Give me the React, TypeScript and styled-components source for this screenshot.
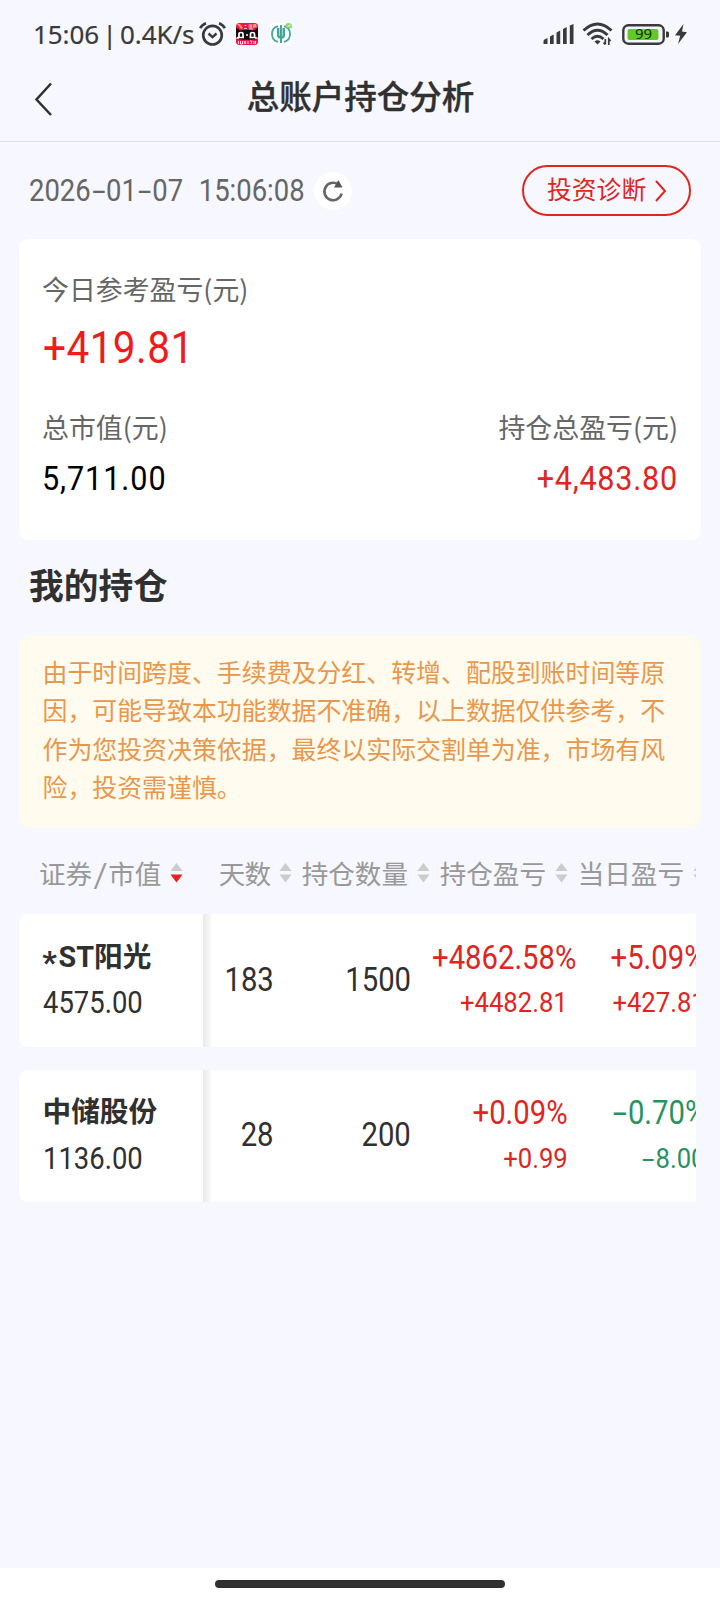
import React from "react";
import styled, { createGlobalStyle } from "styled-components";

const cjk = `"Noto Sans CJK SC", "Noto Sans", sans-serif`;
const RED = "#e0251f";
const GREEN = "#26935f";

const GlobalStyle = createGlobalStyle`
  * { box-sizing: border-box; }
  body { margin: 0; background: #f6f7ff; font-family: ${cjk}; color: #303030; }
`;

const Screen = styled.div`
  width: 720px;
  height: 1600px;
  display: flex;
  flex-direction: column;
  overflow: hidden;
  background: #f6f7ff;
`;

const StatusBar = styled.div`
  height: 68px;
  padding: 0 33px 0 33px;
  display: flex;
  align-items: center;
  justify-content: space-between;
  color: #3a3a3a;
`;

const StatusGroup = styled.div`
  display: flex;
  align-items: center;
`;

const Clock = styled.span`
  font: 400 26px/36px "Noto Sans", sans-serif;
  letter-spacing: -0.1px;
  word-spacing: -3.2px;
  white-space: pre;
  width: 166px;
  -webkit-text-stroke: 0.2px #3a3a3a;
`;

const Icon = styled.svg<{ $left?: number }>`
  display: block;
  flex: none;
  overflow: visible;
  margin-left: ${(p) => p.$left ?? 0}px;
`;

const Nav = styled.header`
  height: 74px;
  padding: 0 34px 12px;
  display: grid;
  grid-template-columns: 40px 1fr 40px;
  align-items: center;
  border-bottom: 1px solid #e2e5e5;
`;

const Title = styled.h1`
  margin: -8px 0 0 1px;
  font-size: 32.5px;
  line-height: 48px;
  font-weight: 500;
  text-align: center;
  -webkit-text-stroke: 0.4px #303030;
`;

const TimeRow = styled.div`
  height: 97px;
  padding: 0 29px 0 29px;
  display: flex;
  align-items: center;
  justify-content: space-between;
`;

const TimeGroup = styled.div`
  display: flex;
  align-items: center;
  gap: 9px;
`;

const TimeBox = styled.div`
  width: 276px;
  display: flex;
  justify-content: space-between;
`;

const Refresh = styled.button`
  width: 38px;
  height: 38px;
  border: 0;
  padding: 0;
  border-radius: 50%;
  background: #fff;
  display: grid;
  place-items: center;
`;

const Diagnose = styled.button`
  width: 169px;
  height: 51px;
  padding: 0 0 0 23px;
  border: 2px solid ${RED};
  border-radius: 26px;
  background: transparent;
  color: ${RED};
  font: 400 24.8px/44px ${cjk};
  display: flex;
  align-items: center;
  span { margin-top: -6px; }
`;

const Digits = styled.span<{ $size: number; $color?: string; $align?: "left" | "right"; $overhang?: number; $track?: number }>`
  display: block;
  width: max-content;
  align-self: ${(p) => (p.$align === "right" ? "flex-end" : "flex-start")};
  margin-right: ${(p) => -(p.$overhang ?? 0)}px;
  font-family: Roboto, sans-serif;
  font-size: ${(p) => p.$size}px;
  line-height: 40px;
  letter-spacing: ${(p) => p.$track ?? 0}px;
  white-space: pre;
  color: ${(p) => p.$color ?? "#303030"};
  transform: scaleX(0.9);
  transform-origin: ${(p) => p.$align ?? "left"} center;
`;

const Dash = styled.span`
  display: inline-block;
  width: 0.56em;
  text-align: center;
  transform: scaleX(1.75);
`;

type NumProps = {
  text: string;
  size: number;
  color?: string;
  align?: "left" | "right";
  overhang?: number;
  track?: number;
};

function Num({ text, size, color, align, overhang, track }: NumProps) {
  return (
    <Digits $size={size} $color={color} $align={align} $overhang={overhang} $track={track}>
      {text.split(/(-)/).map((part, i) => (part === "-" ? <Dash key={i}>-</Dash> : part))}
    </Digits>
  );
}

const Summary = styled.section`
  height: 301px;
  margin: 0 19px;
  padding: 30px 23px 0;
  border-radius: 9px;
  background: #fff;
`;

const Label = styled.div`
  font-size: 26.9px;
  line-height: 40px;
  color: #666;
  white-space: nowrap;
`;

const Today = styled.div`
  height: 56px;
  margin: 11px 0 31px 1px;
  padding-top: 8px;
`;

const Split = styled.div`
  display: flex;
  justify-content: space-between;
`;

const Metric = styled.div`
  display: flex;
  flex-direction: column;
  gap: 11px;
`;

const SectionTitle = styled.h2`
  height: 96px;
  margin: 0;
  padding: 20px 29px 0;
  font-size: 34.7px;
  line-height: 48px;
  font-weight: 700;
`;

const Notice = styled.p`
  height: 192px;
  margin: 0 19px;
  padding: 16px 20px 0 23.5px;
  border-radius: 10px;
  background: #fffbee;
  color: #e9974b;
  font-size: 24.92px;
  line-height: 38.33px;
`;

const Table = styled.section`
  margin: 0 24px 0 19px;
`;

const HeadRow = styled.div`
  height: 86px;
  padding-top: 4px;
  display: flex;
  align-items: center;
  color: #999;
  font-size: 26.6px;
  line-height: 40px;
  white-space: nowrap;
`;

const HeadFixed = styled.div`
  width: 184px;
  flex: none;
  padding: 0 20px;
  display: flex;
  align-items: center;
  justify-content: space-between;
`;

const Slash = styled.span`
  display: inline-block;
  margin: 0 2.8px;
  transform: scaleX(1.3);
`;

const HeadScroll = styled.div`
  flex: 1;
  min-width: 0;
  display: flex;
  overflow: hidden;
`;

const HeadCell = styled.div<{ $width: number; $track?: number }>`
  width: ${(p) => p.$width}px;
  flex: none;
  display: flex;
  align-items: center;
  justify-content: flex-end;
  gap: 9px;
  letter-spacing: ${(p) => p.$track ?? 0}px;
`;

const Row = styled.div<{ $height: number }>`
  height: ${(p) => p.$height}px;
  margin-bottom: 23px;
  display: flex;
  background: #fff;
  border-radius: 9px 0 0 9px;
`;

const Security = styled.div<{ $lift: number }>`
  width: 184px;
  flex: none;
  padding: ${(p) => 23 - p.$lift}px 0 0 23.5px;
  display: flex;
  flex-direction: column;
  gap: ${(p) => 6 + p.$lift}px;
`;

const Name = styled.div`
  height: 40px;
  font: 700 28.7px/40px Roboto, ${cjk};
  white-space: nowrap;
`;

const CjkName = styled.span`
  font-family: ${cjk};
  line-height: 1;
`;

const Star = styled.span`
  position: relative;
  top: 5px;
  display: inline-block;
  margin-right: 3px;
  transform: scale(1.12);
`;

const Scroll = styled.div`
  position: relative;
  flex: 1;
  min-width: 0;
  display: flex;
  overflow: hidden;
  &::before {
    content: "";
    position: absolute;
    inset: 0 auto 0 0;
    width: 8px;
    background: linear-gradient(90deg, #e9e9ea, #f3f2f3 50%, #faf9fa);
  }
`;

const Cell = styled.div<{ $width: number; $inset: number; $single?: boolean; $lift?: number }>`
  width: ${(p) => p.$width}px;
  flex: none;
  padding: ${(p) => (p.$single ? 46 : 24) - (p.$lift ?? 0)}px ${(p) => p.$inset}px 0 0;
  display: flex;
  flex-direction: column;
  gap: ${(p) => 5 + (p.$lift ?? 0)}px;
`;

const Spacer = styled.div`
  flex: 1;
`;

const HomeBar = styled.div`
  height: 32px;
  background: #fff;
  display: flex;
  justify-content: center;
  padding-top: 12px;
`;

const Pill = styled.div`
  width: 290px;
  height: 8px;
  border-radius: 4px;
  background: #303030;
`;

function Sort({ active }: { active?: boolean }) {
  return (
    <Icon width="13" height="20" viewBox="0 0 13 20">
      <path d="M6.5 0L12.6 8H.4z" fill="#ccc" />
      <path d="M.4 11.5h12.2L6.5 19.5z" fill={active ? "#ef1f1f" : "#ccc"} />
    </Icon>
  );
}

const columns = [
  { name: "天数", width: 89, track: -1 },
  { name: "持仓数量", width: 138, track: 0 },
  { name: "持仓盈亏", width: 138, track: 0 },
  { name: "当日盈亏", width: 138, track: 0 },
];

const holdings = [
  {
    star: true, latin: "ST", name: "阳光", value: "4575.00", days: "183", qty: "1500",
    pct: "+4862.58%", amount: "+4482.81", overhang: 8, dayPct: "+5.09%", dayAmount: "+427.81", dayColor: RED,
    height: 133, lift: 0,
  },
  {
    star: false, latin: "", name: "中储股份", value: "1136.00", days: "28", qty: "200",
    pct: "+0.09%", amount: "+0.99", overhang: 0, dayPct: "-0.70%", dayAmount: "-8.00", dayColor: GREEN,
    height: 132, lift: 1,
  },
];

export default function App() {
  return (
    <Screen>
      <GlobalStyle />
      <StatusBar>
        <StatusGroup>
          <Clock>15:06 | 0.4K/s</Clock>
          <Icon width="27" height="24" viewBox="0 0 27 24" fill="none" stroke="#3a3a3a">
            <circle cx="13.5" cy="13.2" r="9.3" strokeWidth="2.7" />
            <path d="M9.5 11.5l4 3.6 4-3.6" strokeWidth="2.4" />
            <path d="M1.2 6.3Q3 2.6 7 1.2M25.8 6.3Q24 2.6 20 1.2" strokeWidth="2.6" />
          </Icon>
          <Icon $left={10} width="22" height="22" viewBox="0 0 22 22">
            <rect width="22" height="22" rx="3.5" fill="#e8154f" />
            <path d="M0 4.500L4 7.500q7-1.500 14 0l4-3V16q-11 1.500-22 0z" fill="#14090b" />
            <path d="M1 1h3l3 4-2 1zM17 1h3l1 3-4 1zM0 14.500h3v1.500H0zM19 14.500h3v1.500h-3z" fill="#f3a05b" />
            <path d="M8.500 2.500h2M8 5.500h3M12.500 2h4M12.500 4h4M13 6h4M15 2v4" stroke="#ffd4dc" strokeWidth=".9" />
            <g fill="none" stroke="#fff" strokeWidth="1.700">
              <path d="M3 14v-3q0-1.500 2-1.500t2 1.500v3M14.500 14v-3q0-1.500 2-1.500t2 1.500v3" />
              <path d="M10 12h2M1 14.500h7M13.500 14.500h7" strokeWidth="1.400" />
            </g>
            <path d="M2.500 18v3M4.500 18v3h2v-3M8 18l2 3M10 18l-2 3M12 18v3M14 18h2l-1 3M18 18v3M19.500 18v3" stroke="#ffd9e2" strokeWidth="1" fill="none" />
          </Icon>
          <Icon $left={12} width="22" height="22" viewBox="0 0 22 22">
            <rect width="22" height="22" rx="3.5" fill="#fff" />
            <g fill="none" stroke="#3fa79b">
              <path d="M8 3.200a8.200 8.200 0 0 0 0 15.800M14 3.200a8.200 8.200 0 0 1 0 15.800" strokeWidth="1.800" />
              <path d="M11 2v18" strokeWidth="2" />
              <path d="M8.200 5v7.500q0 2 2.800 2T13.800 12.500V5" strokeWidth="2.400" />
            </g>
            <path d="M15.500 1q3-2 6 0l.5 4q-4 1-6-1z" fill="#8ed968" />
            <path d="M17.500 3.500l3-1.500" stroke="#eaffdf" strokeWidth="1" />
          </Icon>
        </StatusGroup>
        <StatusGroup>
          <Icon width="32" height="20" viewBox="0 0 32 20" fill="#3a3a3a">
            <path d="M.5 17q0-1 1-1.500l3-1.500v6H.5zM7 12.500l3.700-2V20H7zM13.500 8.500L17.200 6.500V20h-3.700zM20 5l3.700-2v17H20zM26.800 1.500L30.500 0v20h-3.700z" />
          </Icon>
          <Icon $left={7} width="31" height="24" viewBox="0 0 31 24" fill="none" stroke="#3a3a3a">
            <path d="M1.500 8.500Q15.500-4.500 29.500 8.500" strokeWidth="3" />
            <path d="M5.500 13Q15.500 3.500 25.500 13" strokeWidth="3" />
            <path d="M9.500 17Q15.500 11.500 21.500 17" strokeWidth="3" />
            <path d="M15.500 22.500l-3-3q3-2.500 6 0z" fill="#3a3a3a" stroke="none" />
            <path d="M23.300 17v5.500M21.500 20.500l1.800 2M26.800 23v-6l1.800 2" strokeWidth="1.700" />
          </Icon>
          <Icon $left={9} width="48" height="21" viewBox="0 0 48 21">
            <rect x="1.300" y="1.300" width="40.400" height="18.400" rx="5" fill="none" stroke="#3a3a3a" strokeWidth="2.400" />
            <rect x="5.500" y="5" width="31" height="11" rx="2" fill="#62c926" />
            <path d="M44 7.500h1.500q1.500 0 1.500 1.500v3q0 1.500-1.500 1.500H44z" fill="#3a3a3a" />
            <text x="21.500" y="15.300" fontFamily="Noto Sans" fontSize="15" fontWeight="400" textAnchor="middle" fill="#16330a">99</text>
          </Icon>
          <Icon $left={5} width="12" height="20" viewBox="0 0 12 20">
            <path d="M8.500 0L0 11.300l5.200.5L3 20l9-11.800-5-.7z" fill="#3a3a3a" />
          </Icon>
        </StatusGroup>
      </StatusBar>

      <Nav>
        <Icon width="17" height="34" viewBox="0 0 17 34" fill="none" stroke="#303030" strokeWidth="2.500">
          <path d="M17 1.500L2.500 17.500l14.500 15.500" />
        </Icon>
        <Title>总账户持仓分析</Title>
      </Nav>

      <TimeRow>
        <TimeGroup>
          <TimeBox>
            <Num text="2026-01-07" size={30.5} color="#666" overhang={24} />
            <Num text="15:06:08" size={30.5} color="#666" align="right" />
          </TimeBox>
          <Refresh>
            <Icon width="22" height="22" viewBox="0 0 22 22">
              <path d="M16 4.300A8.700 8.700 0 1 0 19.600 13.500" fill="none" stroke="#666" strokeWidth="2.600" />
              <path d="M16.300 0L20.500 7.500h-8.500z" fill="#555" />
            </Icon>
          </Refresh>
        </TimeGroup>
        <Diagnose>
          <span>投资诊断</span>
          <Icon $left={9} width="12" height="22" viewBox="0 0 12 22" fill="none" stroke={RED} strokeWidth="2">
            <path d="M1 1l9 10-9 10" />
          </Icon>
        </Diagnose>
      </TimeRow>

      <Summary>
        <Label>今日参考盈亏(元)</Label>
        <Today>
          <Num text="+419.81" size={45} color="#ee1c1a" track={0.5} />
        </Today>
        <Split>
          <Metric>
            <Label>总市值(元)</Label>
            <Num text="5,711.00" size={34} color="#000" track={1} />
          </Metric>
          <Metric>
            <Label>持仓总盈亏(元)</Label>
            <Num text="+4,483.80" size={34} color={RED} align="right" track={0.8} />
          </Metric>
        </Split>
      </Summary>

      <SectionTitle>我的持仓</SectionTitle>
      <Notice>
        由于时间跨度、手续费及分红、转增、配股到账时间等原因，可能导致本功能数据不准确，以上数据仅供参考，不作为您投资决策依据，最终以实际交割单为准，市场有风险，投资需谨慎。
      </Notice>

      <Table>
        <HeadRow>
          <HeadFixed>
            <span>证券<Slash>/</Slash>市值</span>
            <Sort active />
          </HeadFixed>
          <HeadScroll>
            {columns.map((c) => (
              <HeadCell key={c.name} $width={c.width} $track={c.track}>
                {c.name}
                <Sort />
              </HeadCell>
            ))}
          </HeadScroll>
        </HeadRow>
        {holdings.map((h) => (
          <Row key={h.name} $height={h.height}>
            <Security $lift={h.lift}>
              <Name>
                {h.star && <Star>*</Star>}
                {h.latin}
                <CjkName>{h.name}</CjkName>
              </Name>
              <Num text={h.value} size={30.5} />
            </Security>
            <Scroll>
              <Cell $width={89} $inset={18} $lift={h.lift} $single>
                <Num text={h.days} size={32.5} align="right" />
              </Cell>
              <Cell $width={138} $inset={19} $lift={h.lift} $single>
                <Num text={h.qty} size={32.5} align="right" />
              </Cell>
              <Cell $width={138} $inset={0} $lift={h.lift}>
                <Num text={h.pct} size={32.5} color={RED} align="right" overhang={h.overhang} />
                <Num text={h.amount} size={28.5} color={RED} align="right" />
              </Cell>
              <Cell $width={138} $inset={0} $lift={h.lift}>
                <Num text={h.dayPct} size={32.5} color={h.dayColor} align="right" />
                <Num text={h.dayAmount} size={28.5} color={h.dayColor} align="right" />
              </Cell>
            </Scroll>
          </Row>
        ))}
      </Table>
      <Spacer />
      <HomeBar>
        <Pill />
      </HomeBar>
    </Screen>
  );
}
